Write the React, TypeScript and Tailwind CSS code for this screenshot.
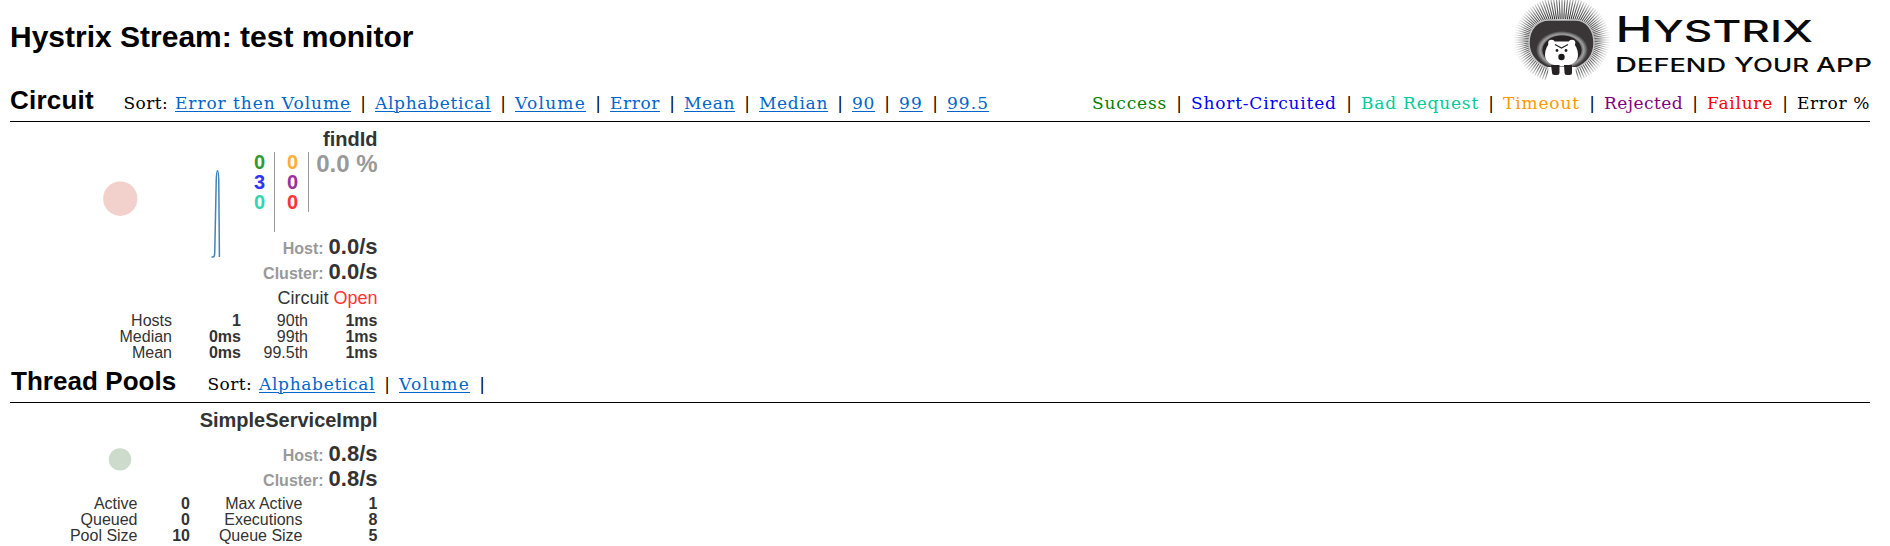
import { Fragment, type ReactNode } from "react";

type Item = { label: string; cls: string };

const circuitSorts: Item[] = [
  { label: "Error then Volume", cls: "w-[176px] tracking-[0.93px]" },
  { label: "Alphabetical", cls: "w-[116px] tracking-[0.68px]" },
  { label: "Volume", cls: "w-[71px] tracking-[1.25px]" },
  { label: "Error", cls: "w-[50px] tracking-[0.58px]" },
  { label: "Mean", cls: "w-[51px] tracking-[0.6px]" },
  { label: "Median", cls: "w-[69px] tracking-[0.7px]" },
  { label: "90", cls: "w-[23px] tracking-[0.7px]" },
  { label: "99", cls: "w-[24px] tracking-[1.1px]" },
  { label: "99.5", cls: "w-[42px] tracking-[1.05px]" },
];

const poolSorts: Item[] = [
  { label: "Alphabetical", cls: "w-[116px] tracking-[0.68px]" },
  { label: "Volume", cls: "w-[71px] tracking-[1.25px]" },
];

const legend: Item[] = [
  { label: "Success", cls: "w-[75px] tracking-[0.85px] text-[#008000]" },
  { label: "Short-Circuited", cls: "w-[146px] tracking-[0.8px] text-[#0000ff]" },
  { label: "Bad Request", cls: "w-[118px] tracking-[0.8px] text-[#00cc99]" },
  { label: "Timeout", cls: "w-[77px] tracking-[0.85px] text-[#ff9900]" },
  { label: "Rejected", cls: "w-[79px] tracking-[0.45px] text-[#800080]" },
  { label: "Failure", cls: "w-[66px] tracking-[0.75px] text-[#ff0000]" },
  { label: "Error %", cls: "w-[73px] tracking-[0.64px] text-black" },
];

function Bar() {
  return <span className="w-6 text-center">|</span>;
}

function SortLinks({ items }: { items: Item[] }) {
  return (
    <>
      {items.map((item, i) => (
        <Fragment key={item.label}>
          {i > 0 && <Bar />}
          <a
            href="#"
            className={`${item.cls} whitespace-nowrap text-[#0066cc] underline decoration-1 underline-offset-2`}
          >
            {item.label}
          </a>
        </Fragment>
      ))}
    </>
  );
}

function SectionBar({ children }: { children: ReactNode }) {
  return (
    <div className="flex h-[37px] items-baseline border-b border-black font-['DejaVu_Serif',serif] text-[17px] leading-[20px]">
      {children}
    </div>
  );
}

const RAYS = 104;
const rays = Array.from({ length: RAYS }, (_, i) => {
  const a = (i / RAYS) * Math.PI * 2 - Math.PI / 2;
  const c = Math.cos(a);
  const s = Math.sin(a);
  return { x1: 52 + 30 * c, y1: 40 + 21 * s, x2: 52 + 48 * c, y2: 40 + 43 * s, down: s > 0.94 };
}).filter((r) => !r.down);

function Logo() {
  return (
    <svg className="h-[85px] w-[362px]" viewBox="0 0 362 85" aria-label="Hystrix">
      <defs>
        <radialGradient id="fade" gradientUnits="userSpaceOnUse" cx="52" cy="40" r="48">
          <stop offset="0.5" stopColor="#333" />
          <stop offset="0.78" stopColor="#666" stopOpacity="0.9" />
          <stop offset="1" stopColor="#bbb" stopOpacity="0.15" />
        </radialGradient>
        <radialGradient id="ring">
          <stop offset="0.72" stopColor="#555" />
          <stop offset="0.84" stopColor="#a0a0a0" />
          <stop offset="1" stopColor="#3a3638" />
        </radialGradient>
      </defs>
      <g stroke="url(#fade)" strokeWidth="1.1">
        {rays.map((r, i) => (
          <line key={i} x1={r.x1} y1={r.y1} x2={r.x2} y2={r.y2} />
        ))}
      </g>
      <path
        d="M19 43C19 28 28 20 39 20H65C76 20 84 29 84 43C84 55 77 64 66 68H38C27 64 19 55 19 43Z"
        fill="#3a3638"
        stroke="#c0c0c0"
        strokeWidth="1.5"
      />
      <ellipse cx="52" cy="50" rx="26" ry="19" fill="url(#ring)" />
      <path d="M38 67H66L64 82H40Z" fill="#fff" />
      <ellipse cx="52" cy="50" rx="19.5" ry="14.5" fill="#262224" />
      <g fill="#fff">
        <circle cx="41.5" cy="43" r="3.3" />
        <circle cx="62" cy="43" r="3.3" />
        <path d="M41 41.5H62C66 45 68 50 68 55C68 62 61 66 51.5 66C42 66 35 62 35 55C35 50 37 45 41 41.5Z" />
      </g>
      <path d="M45 44.5L51.5 48L58 44.5" fill="none" stroke="#222" strokeWidth="1.2" />
      <circle cx="47" cy="50.5" r="1.4" fill="#222" />
      <circle cx="56" cy="50.5" r="1.4" fill="#222" />
      <circle cx="51.5" cy="57" r="3.2" fill="#1a1a1a" />
      <path
        d="M41 65H49.5V72.5Q49.5 75 47 75H44.5Q42 75 42 72.5ZM54 65H62V72.5Q62 75 59.5 75H57Q54.5 75 54.5 72.5Z"
        fill="#262224"
      />
      <g fontFamily="Inter, sans-serif" fontWeight="500" fill="#0a0a0a">
        <text x="105.5" y="42" fontSize="35.5" textLength="37" lengthAdjust="spacingAndGlyphs">H</text>
        <text x="143" y="42" fontSize="30" textLength="160" lengthAdjust="spacingAndGlyphs">YSTRIX</text>
        <text x="105" y="72" fontSize="20.5" textLength="22" lengthAdjust="spacingAndGlyphs">D</text>
        <text x="127" y="72" fontSize="18" textLength="89" lengthAdjust="spacingAndGlyphs">EFEND</text>
        <text x="224" y="72" fontSize="20.5" textLength="20" lengthAdjust="spacingAndGlyphs">Y</text>
        <text x="243" y="72" fontSize="18" textLength="56" lengthAdjust="spacingAndGlyphs">OUR</text>
        <text x="306" y="72" fontSize="20.5" textLength="20" lengthAdjust="spacingAndGlyphs">A</text>
        <text x="326" y="72" fontSize="18" textLength="36" lengthAdjust="spacingAndGlyphs">PP</text>
      </g>
    </svg>
  );
}

function Rates({ host, cluster }: { host: string; cluster: string }) {
  return (
    <div className="text-right text-[22px] font-bold leading-[25px]">
      {[
        ["Host:", host],
        ["Cluster:", cluster],
      ].map(([label, value]) => (
        <div key={label} className="flex items-baseline justify-end gap-[5px] whitespace-nowrap">
          <span className="text-base leading-[18px] text-[#999]">{label}</span>
          <span>{value}</span>
        </div>
      ))}
    </div>
  );
}

function Stats({ rows, cols }: { rows: string[][]; cols: string }) {
  return (
    <div className={`grid ${cols} text-right text-[16px] leading-4`}>
      {rows.flat().map((cell, i) => (
        <span key={i} className={i % 2 ? "font-bold" : ""}>
          {cell}
        </span>
      ))}
    </div>
  );
}

export default function App() {
  return (
    <div className="h-[546px] overflow-hidden bg-white pl-[10px] font-['Liberation_Sans',Arial,sans-serif] text-black">
      <header className="flex h-[85px] items-start justify-between pr-[18px]">
        <h1 className="pt-5 text-[30px] font-bold leading-[33px]">Hystrix Stream: test monitor</h1>
        <Logo />
      </header>

      <main className="mr-5">
        <SectionBar>
          <h2 className="w-[113px] font-['Liberation_Sans',Arial,sans-serif] text-[26px] font-bold leading-[30px] tracking-[0.2px]">
            Circuit
          </h2>
          <span className="w-[52px] pl-[0.5px] tracking-[0.4px]">Sort:</span>
          <SortLinks items={circuitSorts} />
          <div className="ml-auto flex whitespace-nowrap">
            {legend.map((item, i) => (
              <Fragment key={item.label}>
                {i > 0 && <Bar />}
                <span className={item.cls}>{item.label}</span>
              </Fragment>
            ))}
          </div>
        </SectionBar>

        <section className="h-[244px] w-[367.5px] pt-[6px] text-[#333]">
          <h3 className="text-right text-[20px] font-bold leading-[22px]">findId</h3>
          <div className="mt-[2px] flex">
            <svg className="h-[132px] w-[240px]" viewBox="0 0 240 132">
              <circle cx="110.3" cy="46.7" r="17.2" fill="#f2d1cd" />
              <path
                d="M201.5 105H203.2C204.6 105 204.7 103 204.8 98L206.2 30C206.5 15 208.5 15 208.8 30L209.4 105"
                fill="none"
                stroke="steelblue"
                strokeWidth="1.5"
              />
            </svg>
            <div className="w-[127.5px]">
              <div className="flex h-[82px] items-start text-[20px] font-bold leading-[20px]">
                <div className="h-20 w-[25px] border-r border-[#999] pr-[9px] text-right">
                  <div className="text-[#339933]">0</div>
                  <div className="text-[#3333ff]">3</div>
                  <div className="text-[#33d6ad]">0</div>
                </div>
                <div className="h-[60px] w-[34px] border-r border-[#999] pr-[10px] text-right">
                  <div className="text-[#ffad33]">0</div>
                  <div className="text-[#993399]">0</div>
                  <div className="text-[#ff3333]">0</div>
                </div>
                <div className="flex-1 whitespace-nowrap text-right text-[24px] leading-[23px] text-[#999]">0.0 %</div>
              </div>
              <Rates host="0.0/s" cluster="0.0/s" />
            </div>
          </div>
          <div className="mb-[5px] mt-1 text-right text-[18px] leading-[20px]">
            Circuit <span className="text-[#ff3333]">Open</span>
          </div>
          <Stats
            cols="grid-cols-[162px_69px_67px_69.5px]"
            rows={[
              ["Hosts", "1", "90th", "1ms"],
              ["Median", "0ms", "99th", "1ms"],
              ["Mean", "0ms", "99.5th", "1ms"],
            ]}
          />
        </section>

        <SectionBar>
          <h2 className="w-[197px] pl-px font-['Liberation_Sans',Arial,sans-serif] text-[26px] font-bold leading-[30px] tracking-[0.05px]">
            Thread Pools
          </h2>
          <span className="w-[52px] pl-[0.5px] tracking-[0.4px]">Sort:</span>
          <SortLinks items={poolSorts} />
          <Bar />
        </SectionBar>

        <section className="w-[367.5px] pt-[6px] text-[#333]">
          <h3 className="text-right text-[20px] font-bold leading-[22px]">SimpleServiceImpl</h3>
          <div className="mb-1 flex h-[61px]">
            <svg className="h-[61px] w-[240px]" viewBox="0 0 240 61">
              <circle cx="110" cy="28.4" r="11.2" fill="#cddbcd" />
            </svg>
            <div className="w-[127.5px] pt-[10px]">
              <Rates host="0.8/s" cluster="0.8/s" />
            </div>
          </div>
          <Stats
            cols="grid-cols-[127.5px_52.5px_112.5px_75px]"
            rows={[
              ["Active", "0", "Max Active", "1"],
              ["Queued", "0", "Executions", "8"],
              ["Pool Size", "10", "Queue Size", "5"],
            ]}
          />
        </section>
      </main>
    </div>
  );
}
